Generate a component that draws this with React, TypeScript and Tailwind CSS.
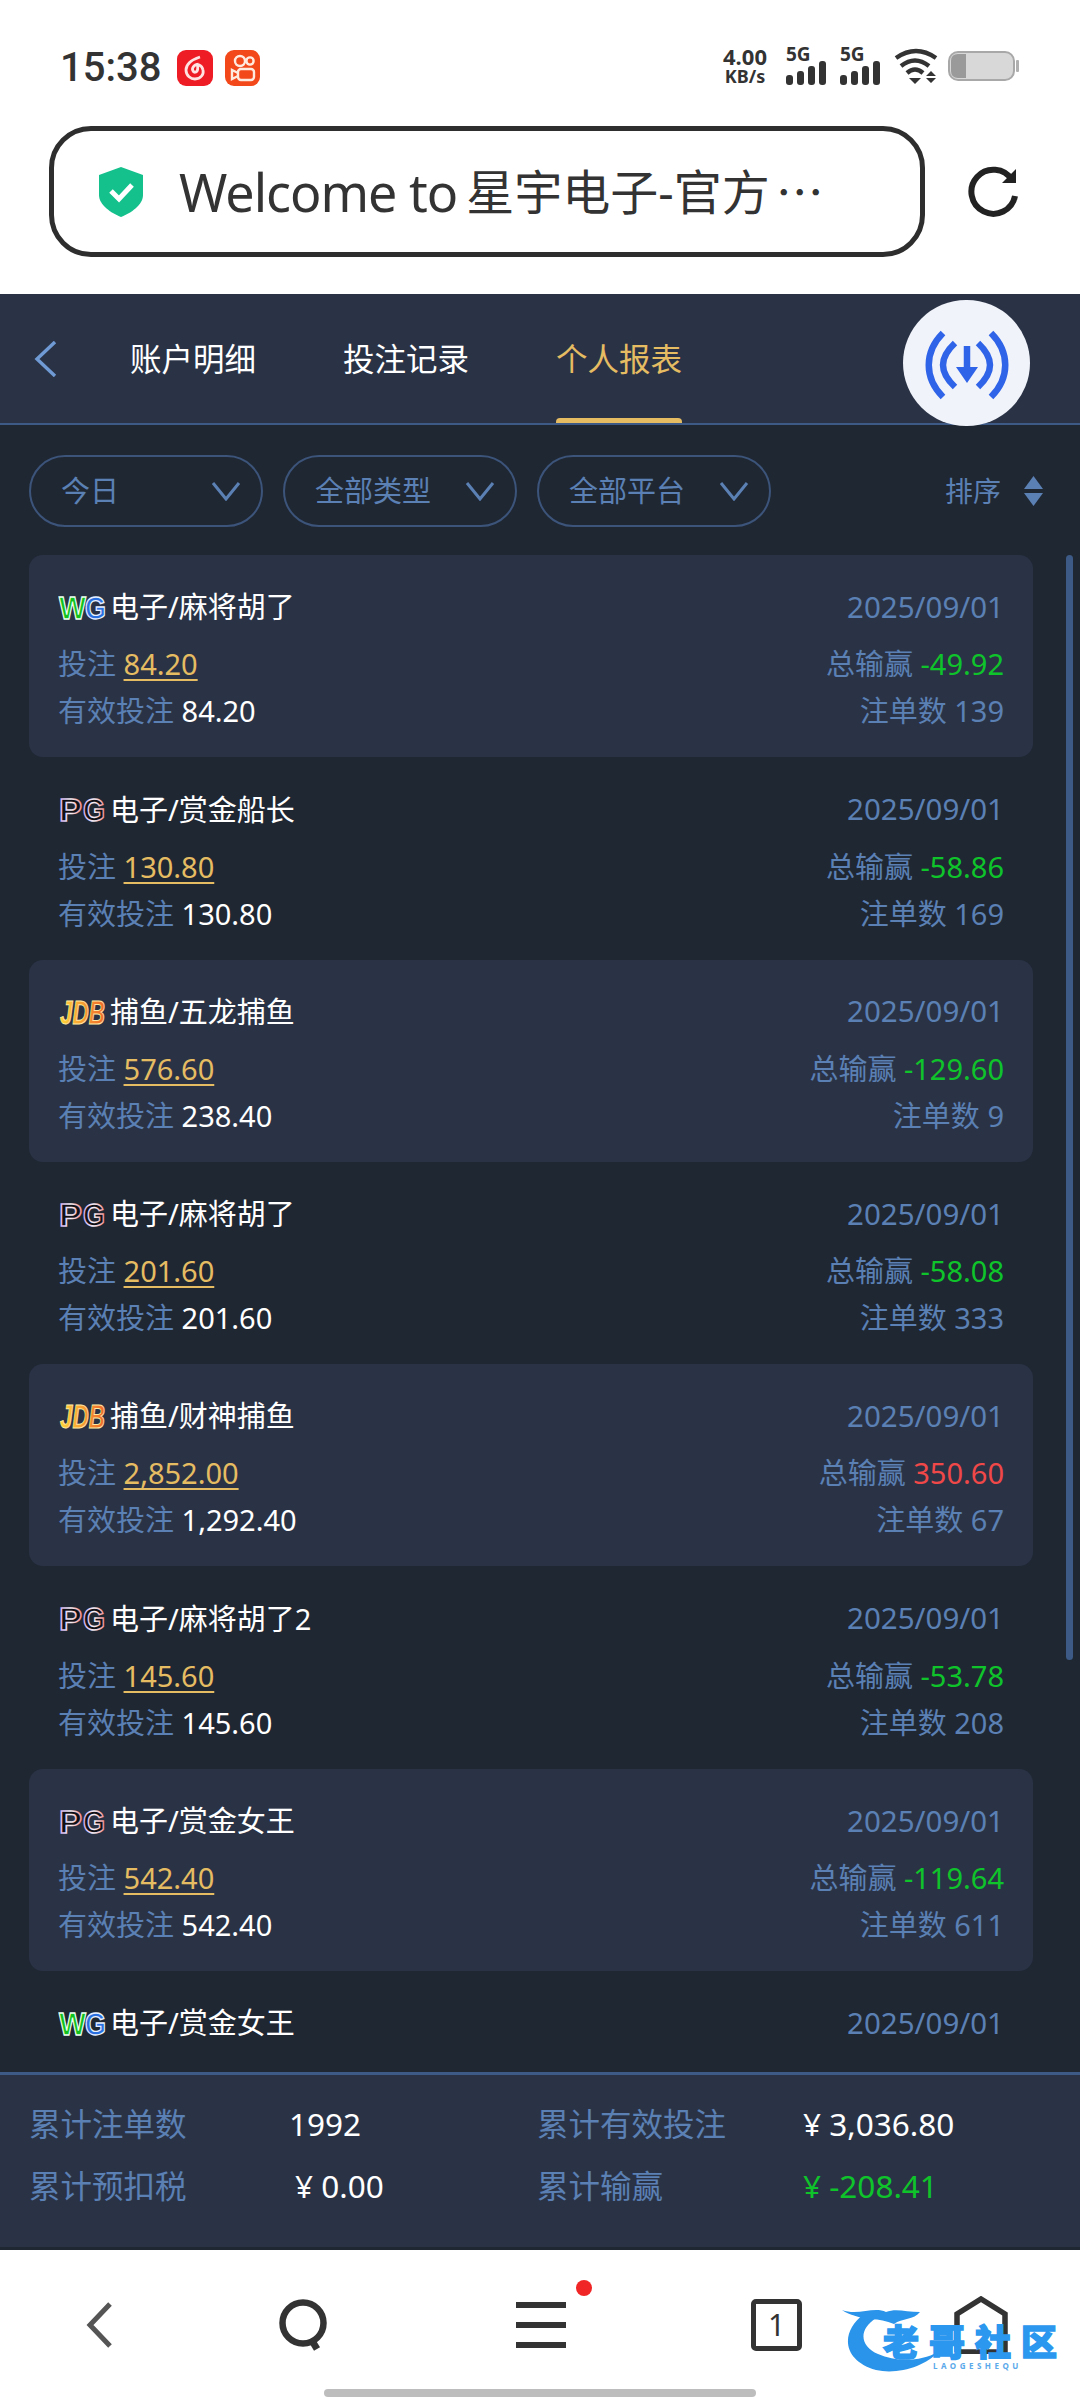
const rows = [
  { logo: 'wg', title: '电子/麻将胡了', bet: '84.20', valid: '84.20', win: '-49.92', count: '139' },
  { logo: 'pg', title: '电子/赏金船长', bet: '130.80', valid: '130.80', win: '-58.86', count: '169' },
  { logo: 'jdb', title: '捕鱼/五龙捕鱼', bet: '576.60', valid: '238.40', win: '-129.60', count: '9' },
  { logo: 'pg', title: '电子/麻将胡了', bet: '201.60', valid: '201.60', win: '-58.08', count: '333' },
  { logo: 'jdb', title: '捕鱼/财神捕鱼', bet: '2,852.00', valid: '1,292.40', win: '350.60', count: '67' },
  { logo: 'pg', title: '电子/麻将胡了2', bet: '145.60', valid: '145.60', win: '-53.78', count: '208' },
  { logo: 'pg', title: '电子/赏金女王', bet: '542.40', valid: '542.40', win: '-119.64', count: '611' },
  { logo: 'wg', title: '电子/赏金女王' },
];

function VendorLogo({ name }: { name: string }) {
  if (name === 'wg') {
    return (
      <svg width="50" height="30" viewBox="0 0 50 30" className="shrink-0">
        <text x="1" y="27" fontSize="32" fontWeight="900" fontFamily="Liberation Sans" fill="#12c21c" stroke="#eafff0" strokeWidth="1.3" textLength="27" lengthAdjust="spacingAndGlyphs">W</text>
        <text x="27" y="27" fontSize="32" fontWeight="900" fontFamily="Liberation Sans" fill="#2a6fe0" stroke="#e6f0ff" strokeWidth="1.3" textLength="21" lengthAdjust="spacingAndGlyphs">G</text>
      </svg>
    );
  }
  if (name === 'pg') {
    return (
      <svg width="50" height="30" viewBox="0 0 50 30" className="shrink-0">
        <defs>
          <linearGradient id="pgEdge" x1="0" y1="0" x2="1" y2="0">
            <stop offset="0" stopColor="#c9a8f0" />
            <stop offset="0.5" stopColor="#f4f2f6" />
            <stop offset="1" stopColor="#f08a8a" />
          </linearGradient>
        </defs>
        <text x="1" y="27" fontSize="31" fontWeight="900" fontFamily="Liberation Sans" fill="#0e1016" stroke="url(#pgEdge)" strokeWidth="1.5" textLength="23" lengthAdjust="spacingAndGlyphs">P</text>
        <text x="25" y="27" fontSize="31" fontWeight="900" fontFamily="Liberation Sans" fill="#0e1016" stroke="url(#pgEdge)" strokeWidth="1.5" textLength="22" lengthAdjust="spacingAndGlyphs">G</text>
      </svg>
    );
  }
  return (
    <svg width="50" height="30" viewBox="0 0 50 30" className="shrink-0">
      <defs>
        <linearGradient id="jdbFill" x1="0" y1="0" x2="1" y2="0">
          <stop offset="0" stopColor="#ffd53a" />
          <stop offset="1" stopColor="#f0682a" />
        </linearGradient>
      </defs>
      <text x="2" y="27" fontSize="34" fontWeight="900" fontStyle="italic" fontFamily="Liberation Sans" fill="url(#jdbFill)" stroke="#ffe9a0" strokeWidth="1" textLength="45" lengthAdjust="spacingAndGlyphs">JDB</text>
    </svg>
  );
}

function Chevron() {
  return (
    <svg width="30" height="20" viewBox="0 0 30 20" fill="none" stroke="#5b80b4" strokeWidth="3">
      <path d="M2 2 L15 18 L28 2" />
    </svg>
  );
}

function Pill({ label }: { label: string }) {
  return (
    <div className="flex h-[72px] w-[234px] items-center justify-between rounded-full border-2 border-[#3c547a] pl-[30px] pr-[20px] text-[29px] text-[#5b80b4]">
      <span>{label}</span>
      <Chevron />
    </div>
  );
}

function Bars() {
  return (
    <svg width="40" height="24" viewBox="0 0 40 24" fill="#333">
      <rect x="0" y="14" width="7" height="10" rx="3" />
      <rect x="11" y="10" width="7" height="14" rx="3" />
      <rect x="22" y="5" width="7" height="19" rx="3" />
      <rect x="33" y="0" width="7" height="24" rx="3" />
    </svg>
  );
}

function StatusIcons() {
  return (
    <div className="flex items-center text-[#333]">
      <div className="flex w-[48px] flex-col items-center text-[22px] font-bold leading-[21px]">
        <span>4.00</span>
        <span className="text-[18px] leading-[19px]">KB/s</span>
      </div>
      <div className="ml-[17px] flex w-[41px] flex-col">
        <span className="text-[19px] font-bold leading-[14px]">5G</span>
        <Bars />
      </div>
      <div className="ml-[13px] flex w-[41px] flex-col">
        <span className="text-[19px] font-bold leading-[14px]">5G</span>
        <Bars />
      </div>
      <svg width="44" height="36" viewBox="0 0 44 36" fill="none" stroke="#333" strokeWidth="4.4" className="ml-[13px]">
        <path d="M2 10 Q22 -4 42 10" />
        <path d="M7 18 Q21 7 35 18" />
        <path d="M13 25 Q21 18 29 25" />
        <path d="M15 30 H27 L21 36 Z" fill="#333" stroke="none" />
        <path d="M37 23 L42 28 H32 Z M32 30 H42 L37 35 Z" fill="#333" stroke="none" />
      </svg>
      <svg width="72" height="30" viewBox="0 0 72 30" className="ml-[10px]">
        <rect x="1" y="1" width="65" height="28" rx="9" fill="#d8d8d8" stroke="#a8a8a8" strokeWidth="2" />
        <path d="M3 10 Q3 3 10 3 H18 V27 H10 Q3 27 3 20 Z" fill="#9a9a9a" />
        <rect x="68" y="9" width="3" height="12" rx="1" fill="#b0b0b0" />
      </svg>
    </div>
  );
}

function WatermarkLogo() {
  return (
    <div className="absolute left-[840px] top-[2298px] h-[76px] w-[226px]">
      <svg width="226" height="76" viewBox="0 0 226 76" className="absolute left-0 top-0">
        <path d="M24 16 C0 34 2 62 36 72 C58 77 86 68 98 54 C80 64 56 64 38 56 C20 48 18 32 36 20 Z" fill="#2a94ea" />
        <path d="M2 12 C18 18 34 8 46 14 C56 10 66 14 80 14 C74 22 62 20 54 26 C44 22 32 20 26 22 C20 18 10 18 2 12 Z" fill="#2a94ea" />
      </svg>
      <span
        className="absolute left-[43px] top-[26px] whitespace-nowrap text-[36px] font-black leading-[38px] tracking-[10px] text-[#2b97ee]"
        style={{ WebkitTextStroke: '1.5px #2b97ee' }}
      >
        老哥社区
      </span>
      <span className="absolute left-[93px] top-[63px] whitespace-nowrap text-[8px] font-bold leading-[10px] tracking-[3.5px] text-[#5aa9ea]">LAOGESHEQU</span>
    </div>
  );
}

export default function App() {
  return (
    <div
      className="relative flex h-[2400px] w-[1080px] flex-col overflow-hidden bg-white"
      style={{ fontFamily: '"Noto Sans", "Noto Sans CJK SC", sans-serif' }}
    >
      {/* system status bar */}
      <div className="flex h-[126px] shrink-0 items-start justify-between pl-[60px] pr-[60px] pt-[46px]">
        <div className="flex items-center">
          <span className="text-[40px] font-medium leading-[44px] text-[#333]" style={{ fontFamily: 'Roboto, sans-serif' }}>15:38</span>
          <div className="ml-[16px] flex h-[36px] w-[36px] items-center justify-center rounded-[9px] bg-[#ee1c25]">
            <svg width="24" height="26" viewBox="0 0 24 26" fill="none" stroke="#ffe3e3" strokeWidth="2.8">
              <path d="M17 2 C8 5 3 10 3 15 C3 21 8 24 12 24 C18 24 21 19 20 15 C19 10 14 8 11 11 C8 14 10 18 13 17 C15 16 15 12 14 8" />
            </svg>
          </div>
          <div className="ml-[12px] flex h-[36px] w-[35px] items-center justify-center rounded-[9px] bg-[#f2481a]">
            <svg width="26" height="28" viewBox="0 0 26 28" fill="none" stroke="#ffeadf" strokeWidth="2.4">
              <circle cx="10" cy="7" r="5" />
              <circle cx="20" cy="7" r="3.6" />
              <rect x="8" y="15" width="16" height="11" rx="3" />
              <path d="M8 19 L2 16 V25 L8 22" />
            </svg>
          </div>
        </div>
        <StatusIcons />
      </div>

      {/* browser url bar */}
      <div className="flex h-[131px] shrink-0 items-center pl-[49px]">
        <div className="flex h-[131px] w-[876px] items-center rounded-[42px] border-[5px] border-[#2e2e2e] pl-[43px]">
          <svg width="48" height="50" viewBox="0 0 48 50" className="shrink-0">
            <path d="M24 0 L46 8 V28 C46 38 34 46 24 50 C14 46 2 38 2 28 V8 Z" fill="#14c08c" />
            <path d="M14 24 L22 32 L35 18" fill="none" stroke="#fff" strokeWidth="5" />
          </svg>
          <div className="ml-[34px] flex items-center whitespace-nowrap leading-[60px] text-[#333]">
            <span className="text-[52px] tracking-[-1px]">Welcome to</span>
            <span className="ml-[9px] text-[48px]">星宇电子-官方</span>
            <span className="ml-[6px] text-[48px]">⋯</span>
          </div>
        </div>
        <svg width="52" height="52" viewBox="0 0 52 52" fill="none" stroke="#222" strokeWidth="6" className="ml-[43px]">
          <path d="M44 14 A22 22 0 1 0 47 30" />
          <path d="M48 3 V17 H34" fill="#222" stroke="none" />
        </svg>
      </div>

      {/* web content */}
      <div className="mt-[37px] flex min-h-0 flex-1 flex-col bg-[#1f2733]">
        <div className="relative flex h-[131px] shrink-0 items-center border-b-2 border-[#3c5a85] bg-[#2a3346]">
          <svg width="24" height="36" viewBox="0 0 24 36" fill="none" stroke="#6f9ad4" strokeWidth="3.4" className="ml-[34px]">
            <path d="M21 1 L3 18 L21 35" />
          </svg>
          <div className="ml-[72px] flex h-full items-center gap-[87px] text-[31.5px] text-white">
            <span>账户明细</span>
            <span>投注记录</span>
            <span className="relative flex h-full items-center text-[#e6bc62]">
              个人报表
              <span className="absolute bottom-0 left-0 right-0 h-[5px] rounded-t-[4px] bg-[#e6bc62]" />
            </span>
          </div>
          <div className="absolute left-[903px] top-[6px] h-[126px] w-[127px] rounded-full bg-[#f1f3fa]">
            <svg width="127" height="126" viewBox="3 4 127 126" fill="none" stroke="#2f63e8" strokeWidth="6.5">
              <path d="M43 37 C24 56 24 82 43 101" />
              <path d="M55 47 C39 62 39 76 55 91" />
              <path d="M91 37 C110 56 110 82 91 101" />
              <path d="M78 47 C94 62 94 76 78 91" />
              <path d="M67 50 V74" />
              <path d="M56 71 H78 L67 87 Z" fill="#2f63e8" stroke="none" />
            </svg>
          </div>
        </div>

        <div className="flex shrink-0 items-center gap-[20px] pl-[29px] pr-[37px] pt-[30px]">
          <Pill label="今日" />
          <Pill label="全部类型" />
          <Pill label="全部平台" />
          <div className="ml-auto flex items-center gap-[23px] text-[28px] text-[#5b80b4]">
            <span>排序</span>
            <svg width="19" height="30" viewBox="0 0 19 30" fill="#5b80b4">
              <path d="M9.5 0 L19 13 H0 Z" />
              <path d="M0 17 H19 L9.5 30 Z" />
            </svg>
          </div>
        </div>

        <div className="relative mt-[28px] min-h-0 flex-1 overflow-hidden">
          {rows.map((row, i) => (
            <div key={i} className={`mx-[29px] h-[202.3px] w-[1004px] rounded-[14px] px-[29px] pt-[32px] ${i % 2 === 0 ? 'bg-[#2a3346]' : ''}`}>
              <div className="flex h-[40px] items-center justify-between">
                <div className="flex items-center gap-[2px] text-[29px] text-white">
                  <VendorLogo name={row.logo} />
                  <span>{row.title}</span>
                </div>
                <span className="text-[29.5px] text-[#5b80b4]">2025/09/01</span>
              </div>
              {row.bet && (
                <>
                  <div className="mt-[17px] flex h-[40px] items-center justify-between text-[29px] text-[#5b80b4]">
                    <div>
                      <span>投注 </span>
                      <span className="text-[#e6bc62] underline underline-offset-4">{row.bet}</span>
                    </div>
                    <div>
                      <span>总输赢 </span>
                      <span className={row.win.startsWith('-') ? 'text-[#0fc42b]' : 'text-[#f04848]'}>{row.win}</span>
                    </div>
                  </div>
                  <div className="mt-[7px] flex h-[40px] items-center justify-between text-[29px] text-[#5b80b4]">
                    <div>
                      <span>有效投注 </span>
                      <span className="text-white">{row.valid}</span>
                    </div>
                    <div>
                      <span>注单数 </span>
                      <span>{row.count}</span>
                    </div>
                  </div>
                </>
              )}
            </div>
          ))}
          <div className="absolute right-[7px] top-0 h-[1105px] w-[7px] rounded-full bg-[#3c5a85]" />
        </div>

        <div className="grid h-[178px] shrink-0 grid-cols-[260px_248px_266px_1fr] content-start gap-y-[22px] border-b-[3px] border-t-[3px] border-b-[#1f2733] border-t-[#3c5a85] bg-[#2a3346] pl-[29px] pt-[29px] text-[31.5px] leading-[40px]">
          <span className="text-[#5b80b4]">累计注单数</span>
          <span className="text-white">1992</span>
          <span className="text-[#5b80b4]">累计有效投注</span>
          <span className="text-white">¥ 3,036.80</span>
          <span className="text-[#5b80b4]">累计预扣税</span>
          <span className="pl-[6px] text-white">¥ 0.00</span>
          <span className="text-[#5b80b4]">累计输赢</span>
          <span className="text-[#0fc42b]">¥ -208.41</span>
        </div>
      </div>

      {/* browser bottom bar */}
      <div className="h-[150px] shrink-0 pt-[46px]">
        <div className="flex h-[58px] items-center pl-[86px]">
          <svg width="26" height="46" viewBox="0 0 26 46" fill="none" stroke="#555" strokeWidth="5">
            <path d="M24 2 L4 23 L24 44" />
          </svg>
          <svg width="50" height="52" viewBox="0 0 50 52" fill="none" stroke="#333" strokeWidth="6.5" className="ml-[167px]">
            <ellipse cx="24" cy="24" rx="20.5" ry="20.5" />
            <path d="M32 40 L38 50" strokeWidth="7" />
          </svg>
          <div className="relative ml-[187px] flex h-[46px] w-[50px] flex-col justify-between">
            <span className="h-[6px] bg-[#333]" />
            <span className="h-[6px] bg-[#333]" />
            <span className="h-[6px] bg-[#333]" />
            <span className="absolute -top-[22px] left-[60px] h-[16px] w-[16px] rounded-full bg-[#f02626]" />
          </div>
          <div className="ml-[185px] flex h-[52px] w-[51px] items-center justify-center rounded-[5px] border-[5px] border-[#333] text-[30px] leading-none text-[#333]">1</div>
          <svg width="54" height="58" viewBox="0 0 54 58" fill="none" stroke="#333" strokeWidth="5.5" className="ml-[152px]">
            <path d="M3 56 V18 L27 3 L51 18 V56 H3" />
          </svg>
        </div>
        <div className="mx-auto mt-[35px] h-[8px] w-[432px] rounded-full bg-[#bdbdbd]" />
      </div>

      <WatermarkLogo />
    </div>
  );
}
